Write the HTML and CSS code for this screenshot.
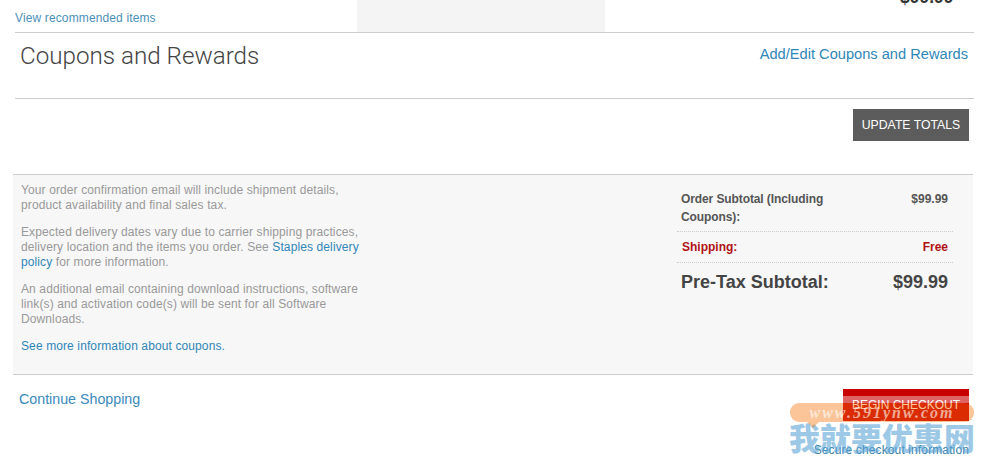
FILE: index.html
```html
<!DOCTYPE html>
<html lang="en">
<head>
    <meta charset="UTF-8">
    <title>Shopping Cart</title>
    <link rel="stylesheet" href="styles.css">
</head>
<body>
    <div class="page">
        <div class="top-row">
            <a class="small-link" href="#">View recommended items</a>
            <div class="gray-block"></div>
            <div class="cut-price">$99.99</div>
        </div>

        <div class="coupons-row">
            <h2>Coupons and Rewards</h2>
            <a class="coupons-link" href="#">Add/Edit Coupons and Rewards</a>
        </div>

        <div class="update-row">
            <button class="update-btn">UPDATE TOTALS</button>
        </div>

        <div class="summary">
            <div class="notes">
                <p>Your order confirmation email will include shipment details, product availability and final sales tax.</p>
                <p>Expected delivery dates vary due to carrier shipping practices, delivery location and the items you order. See <a href="#">Staples delivery policy</a> for more information.</p>
                <p>An additional email containing download instructions, software link(s) and activation code(s) will be sent for all Software Downloads.</p>
                <p><a href="#">See more information about coupons.</a></p>
            </div>
            <div class="totals">
                <div class="line subtotal">
                    <span class="line-label">Order Subtotal (Including Coupons):</span>
                    <span>$99.99</span>
                </div>
                <div class="line shipping">
                    <span>Shipping:</span>
                    <span>Free</span>
                </div>
                <div class="line pretax">
                    <span>Pre-Tax Subtotal:</span>
                    <span>$99.99</span>
                </div>
            </div>
        </div>

        <div class="bottom-row">
            <a class="continue" href="#">Continue Shopping</a>
            <div class="checkout">
                <button class="checkout-btn">BEGIN CHECKOUT</button>
                <a class="secure" href="#">Secure checkout information</a>
            </div>
        </div>

        <!-- site watermark on top of the screenshot -->
        <div class="watermark">
            <div class="wm-bubble">www.591ynw.com</div>
            <div class="wm-name">我就要优惠网</div>
        </div>
    </div>
</body>
</html>
```

FILE: styles.css
```css
body {
    margin: 0;
    background-color: #fff;
    font-family: "Liberation Sans", Arial, sans-serif;
    font-size: 12px;
    color: #333;
}
a {
    color: #2f86b8;
    text-decoration: none;
}
.page {
    position: relative;
    width: 989px;
    height: 466px;
    overflow: hidden;
}
.top-row {
    display: flex;
    height: 32px;
    margin: 0 15px;
    overflow: hidden;
    border-bottom: 1px solid #ccc;
}
.small-link {
    width: 342px;
    padding-top: 11px;
    font-size: 12px;
    letter-spacing: 0.13px;
    color: #4a90b8;
}
.gray-block {
    width: 248px;
    background-color: #f4f4f4;
}
.cut-price {
    margin: -12px 0 0 295px;
    font-size: 17.5px;
    font-weight: bold;
    line-height: 18px;
}
.coupons-row {
    display: flex;
    justify-content: space-between;
    height: 65px;
    margin: 0 15px;
    border-bottom: 1px solid #ccc;
}
.coupons-row h2 {
    margin: 8px 0 0 5px;
    font-family: Roboto, sans-serif;
    font-size: 24.2px;
    font-weight: 300;
    line-height: 30px;
    color: #444;
}
.coupons-link {
    margin: 12px 6px 0 0;
    font-size: 14.65px;
    line-height: 18px;
}
.update-row {
    display: flex;
    justify-content: flex-end;
    height: 75px;
    padding: 10px 20px 0 0;
    box-sizing: border-box;
}
.update-btn {
    width: 116px;
    height: 32px;
    padding: 0;
    background-color: #5c5c5c;
    border: none;
    color: #fff;
    font-family: inherit;
    font-size: 12.25px;
}
.summary {
    display: flex;
    justify-content: space-between;
    height: 199px;
    margin: 0 16px 0 13px;
    padding-left: 8px;
    background-color: #f7f7f7;
    border-top: 1px solid #ccc;
    border-bottom: 1px solid #ccc;
}
.notes {
    width: 342px;
    padding-top: 8px;
    color: #999;
    line-height: 15.2px;
    letter-spacing: 0.11px;
}
.notes p {
    margin: 0 0 11.5px;
}
.totals {
    width: 276px;
    margin-right: 20px;
    padding-top: 8px;
}
.line {
    display: flex;
    justify-content: space-between;
    padding: 0 5px 0 4px;
    border-bottom: 1px dotted #ccc;
    font-weight: bold;
    color: #555;
}
.subtotal {
    height: 49px;
    padding-top: 7px;
    line-height: 18px;
    box-sizing: border-box;
}
.line-label {
    width: 170px;
    letter-spacing: -0.1px;
}
.shipping {
    height: 31px;
    padding-top: 8px;
    padding-left: 5px;
    box-sizing: border-box;
    color: #b01116;
}
.pretax {
    padding-top: 9px;
    border-bottom: none;
    font-size: 18px;
    color: #444;
}
.bottom-row {
    display: flex;
    justify-content: space-between;
    padding: 14px 20px 0 19px;
}
.continue {
    padding-top: 2px;
    font-size: 14.25px;
    line-height: 17px;
    color: #3a8abb;
}
.checkout {
    display: flex;
    flex-direction: column;
    align-items: flex-end;
}
.checkout-btn {
    width: 126px;
    height: 32px;
    padding: 0;
    background: linear-gradient(#c80000 7px, #de6464 7px, #de6464 14px, #c80000 14px);
    border: none;
    color: #fff;
    font-family: inherit;
    font-size: 12px;
}
.secure {
    margin-top: 22px;
    letter-spacing: 0.12px;
    color: #3a7fa8;
}
.watermark {
    position: absolute;
    left: 790px;
    top: 403px;
    width: 184px;
}
.wm-bubble {
    position: relative;
    height: 19px;
    border-radius: 9px;
    background-color: rgba(245, 110, 0, 0.4);
    color: rgba(255, 255, 255, 0.6);
    font-family: "Liberation Serif", serif;
    font-size: 16px;
    font-style: italic;
    font-weight: bold;
    letter-spacing: 2px;
    line-height: 20px;
    text-align: center;
}
.wm-bubble::after {
    content: "";
    position: absolute;
    left: 17px;
    top: 19px;
    border: 6px solid transparent;
    border-top-color: rgba(245, 110, 0, 0.4);
    border-bottom: none;
}
.wm-name {
    margin: -3px 0 0 -1px;
    color: rgba(90, 165, 215, 0.6);
    font-family: "Noto Sans CJK SC", sans-serif;
    font-size: 31px;
    font-weight: 900;
    line-height: 36px;
    white-space: nowrap;
}
```
